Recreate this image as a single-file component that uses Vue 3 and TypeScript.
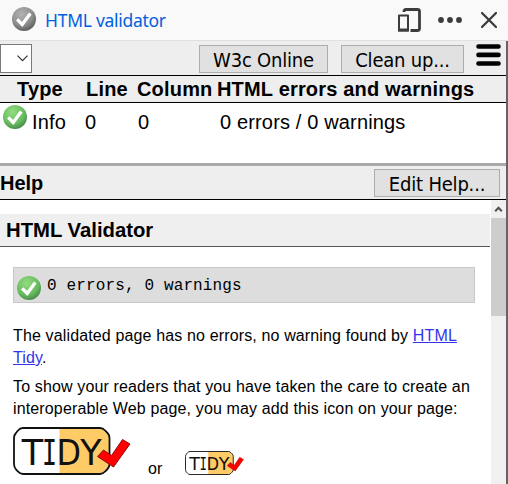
<script setup lang="ts">
interface ResultRow {
  type: string
  line: number
  column: number
  message: string
}

const rows: ResultRow[] = [
  { type: 'Info', line: 0, column: 0, message: '0 errors / 0 warnings' },
]
</script>

<template>
  <div class="panel">
    <header class="titlebar">
      <svg class="title-icon" width="24" height="24" viewBox="0 0 24 24">
        <defs>
          <radialGradient id="ball-gray" cx=".4" cy=".3" r=".7">
            <stop offset="0" stop-color="#b4b4b4" />
            <stop offset=".65" stop-color="#8e8e8e" />
            <stop offset="1" stop-color="#606060" />
          </radialGradient>
          <radialGradient id="ball-green" cx=".4" cy=".3" r=".75">
            <stop offset="0" stop-color="#93dc80" />
            <stop offset=".65" stop-color="#68bb60" />
            <stop offset="1" stop-color="#43844a" />
          </radialGradient>
        </defs>
        <circle cx="12" cy="12" r="12" fill="url(#ball-gray)" />
        <path d="M5.200 12.400l5 5L18.300 6.500" fill="none" stroke="#fff" stroke-width="3.300" />
      </svg>
      <span class="title">HTML validator</span>
      <svg class="dock" width="23" height="24" viewBox="0 0 23 24">
        <path d="M6 4V3.500q0-2 2-2h11.500q2 0 2 2v17q0 2-2 2H12.500" fill="none" stroke="#3c3c3c" stroke-width="2.800" />
        <path d="M1 7.500h9v15H1z" fill="#f9f9f9" stroke="#3c3c3c" stroke-width="2" stroke-linejoin="round" />
        <path d="M0 22h11" stroke="#3c3c3c" stroke-width="3" />
      </svg>
      <svg class="dots" width="24" height="6" viewBox="0 0 24 6" fill="#3c3c3c">
        <circle cx="3" cy="3" r="2.900" /><circle cx="12" cy="3" r="2.900" /><circle cx="21" cy="3" r="2.900" />
      </svg>
      <svg width="16" height="16" viewBox="0 0 16 16">
        <path d="M1 1l14 14M15 1L1 15" stroke="#3c3c3c" stroke-width="2.300" stroke-linecap="round" />
      </svg>
    </header>
    <div class="workspace">
      <div class="pane">
        <div class="toolbar">
          <div class="select">
            <svg width="11" height="7" viewBox="0 0 11 7"><path d="M.5 .7l5 5 5-5" fill="none" stroke="#333" stroke-width="1.200" /></svg>
          </div>
          <button class="btn online"><span>W3c Online</span></button>
          <button class="btn clean"><span>Clean up...</span></button>
          <svg class="burger" width="25" height="24" viewBox="0 0 25 24">
            <path d="M2.500 3.500h20M2.500 11.900h20M2.500 20.500h20" stroke="#000" stroke-width="4.600" stroke-linecap="round" />
          </svg>
        </div>
        <div class="grid-row table-head">
          <span class="h-type">Type</span><span class="h-line">Line</span><span class="h-col">Column</span><span class="h-msg">HTML errors and warnings</span>
        </div>
        <div class="table-body">
          <div v-for="(row, i) in rows" :key="i" class="grid-row data">
            <span class="type">
              <svg class="ball" width="24" height="24" viewBox="0 0 24 24">
                <circle cx="12" cy="12" r="12" fill="url(#ball-green)" />
                <path d="M5.200 12.400l5 5L18.300 6.500" fill="none" stroke="#fff" stroke-width="3.300" />
              </svg>
              <span>{{ row.type }}</span>
            </span>
            <span>{{ row.line }}</span>
            <span class="c-col">{{ row.column }}</span>
            <span class="c-msg">{{ row.message }}</span>
          </div>
        </div>
        <div class="helpbar">
          <span>Help</span>
          <button class="btn edit"><span>Edit Help...</span></button>
        </div>
        <div class="help">
          <main class="doc">
            <h1>HTML Validator</h1>
            <div class="summary">
              <svg class="ball" width="24" height="24" viewBox="0 0 24 24">
                <circle cx="12" cy="12" r="12" fill="url(#ball-green)" />
                <path d="M5.200 12.400l5 5L18.300 6.500" fill="none" stroke="#fff" stroke-width="3.300" />
              </svg>
              <span>0 errors, 0 warnings</span>
            </div>
            <p class="p1">The validated page has no errors, no warning found by <a>HTML<br>Tidy</a>.</p>
            <p class="p2">To show your readers that you have taken the care to create an<br>interoperable Web page, you may add this icon on your page:</p>
            <div class="badges">
              <svg class="tidy" width="118" height="48" viewBox="0 0 118 48">
                <defs>
                  <g id="tidy-badge">
                    <path d="M9 1h79l8.500 8.500v29L88 47H9L1 38.500v-29z" fill="#fff" />
                    <path d="M46.500 1H88l8.500 8.500v29L88 47H46.500z" fill="#ffcb66" />
                    <path d="M10 1h77q3 0 5 2.500l2.500 2.500q2 2 2 5v26q0 3-2 5L92 44.500Q90 47 87 47H10q-3 0-5-2.500L3 42.500Q1 40 1 37V11q0-3 2-5l2-2.500Q7 1 10 1z" fill="none" stroke="#111" stroke-width="1.800" />
                    <g font-size="35" fill="#111">
                      <text x="8.700" y="38">T</text>
                      <text x="29" y="38" font-family="DejaVu Sans Mono" textLength="15" lengthAdjust="spacingAndGlyphs">I</text>
                      <text x="43.500" y="38" textLength="24.500" lengthAdjust="spacingAndGlyphs">D</text>
                      <text x="67.300" y="38">Y</text>
                    </g>
                    <path d="M84.500 29.500l6-6.500 8 5.500L109.500 12.500l7.500 4.500L100.500 40z" fill="#f00" stroke="#8a1010" />
                  </g>
                </defs>
                <use href="#tidy-badge" />
              </svg>
              <span class="or">or</span>
              <svg class="tidy small" width="59" height="24" viewBox="0 0 118 48"><use href="#tidy-badge" /></svg>
            </div>
          </main>
          <div class="scroll">
            <div class="up">
              <svg width="9" height="7" viewBox="0 0 9 7"><path d="M1.200 5.200l3.300-3.500 3.300 3.500" fill="none" stroke="#505050" stroke-width="2" /></svg>
            </div>
            <div class="thumb"></div>
          </div>
        </div>
      </div>
    </div>
  </div>
</template>

<style>
body {
  overflow: hidden;
}
</style>

<style scoped>
.panel {
  width: 508px;
  height: 484px;
  overflow: hidden;
  display: flex;
  flex-direction: column;
  background: #fff;
  color: #000;
  font: 20px/24px "Liberation Sans", Arial, sans-serif;
  box-sizing: border-box;
}
.panel * {
  box-sizing: border-box;
}
svg {
  display: block;
  flex: none;
}
span {
  white-space: nowrap;
}
.titlebar {
  height: 41px;
  flex: none;
  background: #f9f9f9;
  border-bottom: 1px solid #e0e0e0;
  display: flex;
  align-items: center;
  padding: 0 11px 0 12px;
}
.title-icon {
  margin-bottom: 2px;
}
.title {
  font: 17.500px/24px "Noto Sans", sans-serif;
  letter-spacing: -0.28px;
  color: #0060df;
  margin: 0 0 1px 9px;
  flex: 1;
}
.dock {
  margin-right: 17px;
}
.dots {
  margin-right: 19px;
}
.workspace {
  flex: 1;
  min-height: 0;
  background: #646464;
  padding-right: 2px;
}
.pane {
  height: 100%;
  background: #fff;
  display: flex;
  flex-direction: column;
}
.toolbar {
  height: 35px;
  flex: none;
  background: #eee;
  border-bottom: 1px solid #000;
  display: flex;
  align-items: flex-start;
  padding: 2px 5px 0 0;
}
.select {
  width: 32px;
  height: 29px;
  margin-top: 1px;
  background: #fff;
  border: 1px solid #7a7a7a;
  display: flex;
  align-items: center;
  padding-left: 16px;
  margin-right: auto;
}
.btn {
  height: 28px;
  border: 1px solid #adadad;
  background: #e1e1e1;
  color: #000;
  padding: 0;
  font: 20px/26px "DejaVu Sans Condensed", "DejaVu Sans", sans-serif;
  font-stretch: condensed;
  letter-spacing: -0.2px;
  display: flex;
  justify-content: center;
  align-items: center;
  margin-top: 2px;
}
.btn span {
  position: relative;
  top: 1px;
}
.online {
  width: 129px;
  margin-right: 13px;
}
.clean {
  width: 123px;
  margin-right: 12px;
}
.grid-row {
  display: grid;
  grid-template-columns: 85px 52px 80px 1fr;
}
.table-head {
  height: 27px;
  flex: none;
  background: #eee;
  border-bottom: 1px solid #000;
  font-weight: 700;
  line-height: 26px;
  letter-spacing: 0.18px;
}
.h-type {
  padding-left: 17px;
}
.h-line {
  padding-left: 1px;
}
.table-body {
  height: 60px;
  flex: none;
}
.data {
  line-height: 38px;
  letter-spacing: 0.15px;
}
.type {
  display: flex;
  padding-left: 3px;
  gap: 5px;
}
.type .ball {
  margin-top: 2px;
}
.c-col {
  padding-left: 1px;
}
.c-msg {
  padding-left: 3px;
}
.helpbar {
  height: 37px;
  flex: none;
  border-top: 3px solid #aaa;
  border-bottom: 1px solid #000;
  background: #eee;
  display: flex;
  justify-content: space-between;
  font-weight: 700;
  line-height: 34px;
  padding-right: 6px;
}
.edit {
  width: 126px;
  margin-top: 3px;
}
.help {
  flex: 1;
  min-height: 0;
  display: flex;
}
.doc {
  width: 491px;
  padding: 14px 1px 0 0;
  font-size: 16px;
  line-height: 22px;
  letter-spacing: 0.14px;
}
h1 {
  margin: 0 0 20px;
  height: 33px;
  background: #efefef;
  border-bottom: 1px solid #555;
  padding-left: 6px;
  font-size: 20.300px;
  line-height: 32px;
  letter-spacing: 0;
}
.summary {
  margin: 0 15px 0 13px;
  height: 36px;
  background: #ddd;
  border: 1px solid #c8c8c8;
  display: flex;
  padding: 8px 0 0 3px;
  gap: 6px;
  font: 16px/20px "Liberation Mono", "Courier New", monospace;
}
p {
  margin: 0 0 0 13px;
  white-space: nowrap;
}
.p1 {
  margin-top: 22px;
}
.p2 {
  margin-top: 7px;
}
a {
  color: #33e;
  text-decoration: underline;
}
.badges {
  display: flex;
  align-items: flex-start;
  padding-left: 13px;
  margin-top: 7px;
}
.tidy {
  font-family: "DejaVu Sans", sans-serif;
  letter-spacing: 0;
}
.or {
  margin: 31px 22px 0 17px;
}
.small {
  margin-top: 24px;
}
.scroll {
  width: 15px;
  background: #f0f0f0;
}
.up {
  height: 18px;
  display: flex;
  justify-content: center;
  align-items: center;
}
.thumb {
  height: 98px;
  background: #cdcdcd;
}
</style>
